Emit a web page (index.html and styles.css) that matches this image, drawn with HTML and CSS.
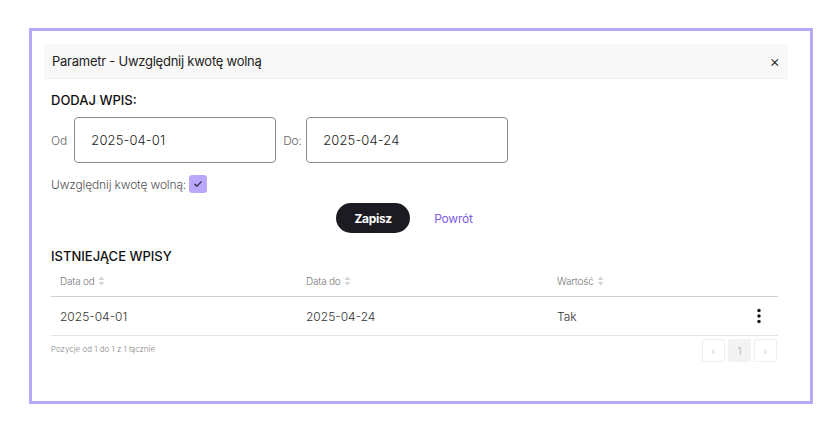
FILE: index.html
```html
<!DOCTYPE html>
<html lang="pl">

<head>
    <meta charset="UTF-8">
    <meta name="viewport" content="width=device-width, initial-scale=1.0">
    <title>Parametr</title>
    <link rel="stylesheet" href="styles.css">
</head>

<body>

    <div class="modal">
        <!-- Header -->
        <div class="modal-header">
            <span class="modal-title">Parametr - Uwzględnij kwotę wolną</span>
            <button class="close-btn">&times;</button>
        </div>

        <div class="modal-body">
            <!-- Add entry -->
            <h3 class="section-title">DODAJ WPIS:</h3>
            <div class="date-row">
                <label class="date-label">Od</label>
                <input class="date-input" type="text" value="2025-04-01">
                <label class="date-label date-label-to">Do:</label>
                <input class="date-input" type="text" value="2025-04-24">
            </div>
            <div class="check-row">
                <span>Uwzględnij kwotę wolną:</span>
                <span class="checkbox">
                    <svg width="10" height="10" viewBox="0 0 10 10">
                        <path d="M1.8 5.2 L4 7.2 L8.2 2.8" fill="none" stroke="#2a2540" stroke-width="1.2" stroke-linecap="round" stroke-linejoin="round"/>
                    </svg>
                </span>
            </div>
            <div class="actions">
                <button class="btn-save">Zapisz</button>
                <button class="btn-back">Powrót</button>
            </div>

            <!-- Existing entries -->
            <h3 class="section-title list-title">ISTNIEJĄCE WPISY</h3>
            <div class="table">
                <div class="table-head">
                    <div class="th">Data od <svg class="sort" width="7" height="10" viewBox="0 0 7 10"><path d="M3.5 0.5 L6.5 4 H0.5 Z M3.5 9.5 L6.5 6 H0.5 Z" fill="#d4d4d4"/></svg></div>
                    <div class="th">Data do <svg class="sort" width="7" height="10" viewBox="0 0 7 10"><path d="M3.5 0.5 L6.5 4 H0.5 Z M3.5 9.5 L6.5 6 H0.5 Z" fill="#d4d4d4"/></svg></div>
                    <div class="th">Wartość <svg class="sort" width="7" height="10" viewBox="0 0 7 10"><path d="M3.5 0.5 L6.5 4 H0.5 Z M3.5 9.5 L6.5 6 H0.5 Z" fill="#d4d4d4"/></svg></div>
                    <div class="th"></div>
                </div>
                <div class="table-row">
                    <div class="td">2025-04-01</div>
                    <div class="td">2025-04-24</div>
                    <div class="td">Tak</div>
                    <div class="td td-menu">
                        <svg width="6" height="16" viewBox="0 0 6 16">
                            <circle cx="3" cy="2.5" r="1.7" fill="#111"/>
                            <circle cx="3" cy="8" r="1.7" fill="#111"/>
                            <circle cx="3" cy="13.5" r="1.7" fill="#111"/>
                        </svg>
                    </div>
                </div>
            </div>

            <div class="table-footer">
                <span class="info">Pozycje od 1 do 1 z 1 łącznie</span>
                <div class="pager">
                    <span class="page">&lsaquo;</span>
                    <span class="page active">1</span>
                    <span class="page">&rsaquo;</span>
                </div>
            </div>
        </div>
    </div>

</body>

</html>
```

FILE: styles.css
```css
/* General Styles */
body {
    font-family: Inter, "Noto Sans", sans-serif;
    margin: 0;
    padding: 0;
    background-color: white;
    color: #222;
}

.modal {
    box-sizing: border-box;
    width: 784px;
    height: 376px;
    margin: 28px 0 0 29px;
    border: 3px solid #b9a7fa;
    padding: 13px 22px 0 12px;
}

/* Header */
.modal-header {
    display: flex;
    justify-content: space-between;
    align-items: center;
    height: 34px;
    padding: 0 8px;
    background-color: #f8f8f8;
    border-bottom: 1px solid #efefef;
}

.modal-title {
    font-size: 13px;
    letter-spacing: -0.25px;
    color: #222;
}

.close-btn {
    background: none;
    border: none;
    padding: 0;
    font-family: Inter, sans-serif;
    font-size: 16px;
    font-weight: 300;
    color: #111;
    cursor: pointer;
}

/* Body */
.modal-body {
    padding: 0 10px 0 7px;
}

.section-title {
    margin: 12px 0 0;
    font-size: 13px;
    line-height: 18px;
    font-weight: 500;
    color: #111;
}

.date-row {
    display: flex;
    align-items: center;
    margin-top: 8px;
}

.date-label {
    font-size: 12px;
    font-weight: 300;
    color: #666;
    margin-right: 7px;
}

.date-label-to {
    letter-spacing: -0.4px;
    margin-right: 5px;
}

.date-input {
    box-sizing: border-box;
    width: 202px;
    height: 46px;
    padding: 0 16px;
    margin-right: 7px;
    border: 1px solid #8c8b93;
    border-radius: 4px;
    font-family: Inter, sans-serif;
    font-size: 13px;
    font-weight: 300;
    letter-spacing: 0.1px;
    color: #222;
    outline: none;
}

.check-row {
    display: flex;
    align-items: center;
    gap: 3px;
    margin-top: 12px;
    font-size: 12px;
    font-weight: 300;
    letter-spacing: -0.15px;
    color: #555;
}

.checkbox {
    display: flex;
    align-items: center;
    justify-content: center;
    width: 18px;
    height: 18px;
    border-radius: 3px;
    background-color: #bba8fb;
}

.actions {
    display: flex;
    justify-content: center;
    align-items: center;
    gap: 14px;
    margin-top: 10px;
    padding-right: 10px;
}

.btn-save {
    width: 74px;
    height: 30px;
    border: none;
    border-radius: 15px;
    background-color: #1c1b22;
    color: white;
    font-family: Inter, sans-serif;
    font-size: 12px;
    font-weight: 700;
    letter-spacing: -0.3px;
    cursor: pointer;
}

.btn-back {
    background: none;
    border: none;
    padding: 0 10px;
    color: #7c5ce6;
    font-family: Inter, sans-serif;
    font-size: 12px;
    letter-spacing: -0.2px;
    cursor: pointer;
}

.list-title {
    margin-top: 14px;
}

/* Table */
.table-head,
.table-row {
    display: grid;
    grid-template-columns: 246px 251px 1fr 40px;
}

.table-head {
    height: 31px;
    border-bottom: 1px solid #cfcfcf;
}

.th {
    display: flex;
    align-items: center;
    gap: 3px;
    padding-left: 9px;
    font-size: 10px;
    font-weight: 300;
    letter-spacing: -0.2px;
    color: #777;
}

.table-row {
    height: 38px;
    border-bottom: 1px solid #e4e4e4;
}

.td {
    display: flex;
    align-items: center;
    padding-left: 9px;
    font-size: 12px;
    font-weight: 300;
    color: #333;
}

.td-menu {
    justify-content: center;
    padding-left: 2px;
}

.table-footer {
    display: flex;
    justify-content: space-between;
    align-items: flex-start;
    margin-top: 3px;
}

.info {
    margin-top: 5px;
    font-size: 8px;
    font-weight: 300;
    color: #888;
}

.pager {
    display: flex;
    gap: 3px;
    padding-right: 1px;
}

.page {
    box-sizing: border-box;
    display: flex;
    align-items: center;
    justify-content: center;
    width: 23px;
    height: 23px;
    border: 1px solid #eee;
    border-radius: 2px;
    font-size: 10px;
    color: #ccc;
}

.page.active {
    background-color: #f3f3f3;
    border-color: #f3f3f3;
    color: #bbb;
}
```
